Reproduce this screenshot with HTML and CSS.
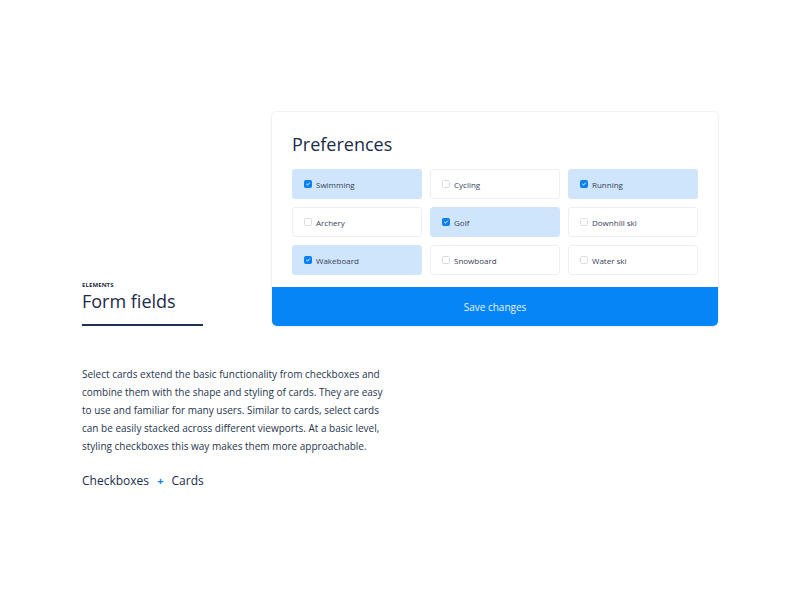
FILE: index.html
```html
<!DOCTYPE html>
<html lang="en">
<head>
<meta charset="utf-8">
<title>Form fields — Select cards</title>
<link rel="stylesheet" href="styles.css">
</head>
<body>
<main class="page">
  <header class="intro">
    <p class="eyebrow">ELEMENTS</p>
    <h1 class="heading">Form fields</h1>
    <hr class="rule">
  </header>

  <form class="card">
    <div class="card-body">
      <h2 class="card-title">Preferences</h2>
      <div class="tiles">
        <label class="tile is-on"><span class="box"><svg viewBox="0 0 8 8"><path d="M2 4.2 3.4 5.5 6 2.6"/></svg></span>Swimming</label>
        <label class="tile"><span class="box"></span>Cycling</label>
        <label class="tile is-on"><span class="box"><svg viewBox="0 0 8 8"><path d="M2 4.2 3.4 5.5 6 2.6"/></svg></span>Running</label>
        <label class="tile"><span class="box"></span>Archery</label>
        <label class="tile is-on"><span class="box"><svg viewBox="0 0 8 8"><path d="M2 4.2 3.4 5.5 6 2.6"/></svg></span>Golf</label>
        <label class="tile"><span class="box"></span>Downhill ski</label>
        <label class="tile is-on"><span class="box"><svg viewBox="0 0 8 8"><path d="M2 4.2 3.4 5.5 6 2.6"/></svg></span>Wakeboard</label>
        <label class="tile"><span class="box"></span>Snowboard</label>
        <label class="tile"><span class="box"></span>Water ski</label>
      </div>
    </div>
    <button class="save" type="button">Save changes</button>
  </form>

  <section class="notes">
    <p class="lede">Select cards extend the basic functionality from checkboxes and combine them with the shape and styling of cards. They are easy to use and familiar for many users. Similar to cards, select cards can be easily stacked across different viewports. At a basic level, styling checkboxes this way makes them more approachable.</p>
    <p class="formula">Checkboxes <span class="plus">+</span> Cards</p>
  </section>
</main>
</body>
</html>
```

FILE: styles.css
```css
* { box-sizing: border-box; }

html, body {
  margin: 0;
  background: #ffffff;
  font-family: "Open Sans", "Noto Sans", sans-serif;
  color: #1b2b48;
}

.page {
  display: grid;
  grid-template-columns: 190px 446px;
  padding: 112px 0 0 82px;
}

/* left heading block */
.intro {
  align-self: end;
  display: flex;
  flex-direction: column;
}

.eyebrow {
  margin: 0;
  font-size: 6px;
  font-weight: 700;
  letter-spacing: 0.1px;
  color: #1b2b48;
}

.heading {
  margin: 0;
  font-size: 18px;
  font-weight: 400;
  line-height: 24px;
  color: #1b2b48;
}

.rule {
  margin: 11px 0 0;
  width: 121px;
  height: 2px;
  border: 0;
  background: #1e3050;
}

/* preferences card */
.card {
  margin: 0;
  background: #fff;
  border-radius: 5px;
  box-shadow: 0 0 0 1px #eef1f5, 0 1px 4px rgba(20, 40, 80, 0.06);
  overflow: hidden;
  display: flex;
  flex-direction: column;
}

.card-body {
  padding: 20px 20px 12px;
}

.card-title {
  margin: 0 0 13px;
  font-size: 18px;
  font-weight: 400;
  line-height: 24px;
  color: #1b2b48;
}

.tiles {
  display: grid;
  grid-template-columns: repeat(3, 130px);
  gap: 8px;
}

.tile {
  height: 30px;
  display: flex;
  align-items: center;
  gap: 4px;
  padding-left: 11px;
  font-size: 8px;
  color: #354257;
  background: #fff;
  border: 1px solid #eceff3;
  border-radius: 3px;
}

.tile.is-on {
  background: #cfe5fb;
  border-color: #cfe5fb;
}

.box {
  width: 8px;
  height: 8px;
  border: 1px solid #d9dde3;
  border-radius: 1.5px;
  background: #fff;
  display: flex;
}

.is-on .box {
  background: #0a80f0;
  border-color: #0a80f0;
}

.box svg {
  width: 6px;
  height: 6px;
  fill: none;
  stroke: #fff;
  stroke-width: 1.2;
  stroke-linecap: round;
  stroke-linejoin: round;
}

.save {
  height: 39px;
  border: 0;
  background: #0585f6;
  color: #e9f3ff;
  font-family: inherit;
  font-size: 10px;
  cursor: pointer;
}

/* description */
.notes {
  grid-column: 1 / -1;
  width: 310px;
  padding-top: 39px;
}

.lede {
  margin: 0;
  font-size: 10px;
  line-height: 18px;
  color: #26344d;
}

.formula {
  margin: 17px 0 0;
  font-size: 12px;
  line-height: 18px;
  color: #1b2b48;
}

.plus {
  color: #0a80f0;
  margin: 0 5px;
  font-size: 11px;
  font-weight: 700;
}
```
